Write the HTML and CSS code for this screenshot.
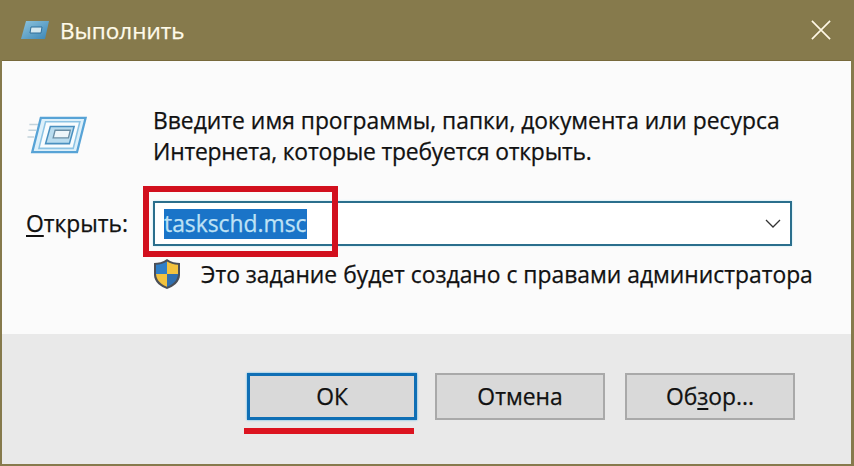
FILE: index.html
```html
<!DOCTYPE html>
<html lang="ru">
<head>
<meta charset="utf-8">
<title>Выполнить</title>
<link rel="stylesheet" href="styles.css">
</head>
<body>
<div class="window">
  <header class="titlebar">
    <svg class="title-icon" viewBox="0 0 30 20" aria-hidden="true">
      <defs><linearGradient id="tg" x1="0" y1="0" x2="1" y2="1"><stop offset="0" stop-color="#8fc4dc"/><stop offset="1" stop-color="#3a86b8"/></linearGradient></defs>
      <path d="M6 1H29L25 19H1Z" fill="url(#tg)"/>
      <path d="M11 7H22L21 13H10Z" fill="#d5e8ef" stroke="#2f6f9a" stroke-width="1"/>
    </svg>
    <span class="title-text">Выполнить</span>
    <svg class="close" viewBox="0 0 22 22" aria-hidden="true"><path d="M1 1L21 21M21 1L1 21" stroke="#fff8e6" stroke-width="1.8" fill="none"/></svg>
  </header>
  <main class="content">
    <div class="intro">
      <svg class="run-icon" viewBox="0 0 62 42" aria-hidden="true">
        <path d="M2 9H11M1 15H9M0 22H7" stroke="#c3d3dc" stroke-width="1.6"/>
        <path d="M14 2H61L52 38H5Z" fill="#ddf0fa" stroke="#57a3d6" stroke-width="2.4"/>
        <path d="M19 6H55L48 34H12Z" fill="#f8fcfe" stroke="#8cc3e4" stroke-width="1.6"/>
        <path d="M24 11H49L44 29H19Z" fill="#b9dcef" stroke="#4a90c0" stroke-width="1.6"/>
        <path d="M29 15H45L43 23H27Z" fill="#eef6fa" stroke="#6a8ea5" stroke-width="1.4"/>
      </svg>
      <p class="intro-text">Введите имя программы, папки, документа или ресурса<br><span class="line-two">Интернета, которые требуется открыть.</span></p>
    </div>
    <div class="open-row">
      <label class="open-label"><span class="u">О</span>ткрыть:</label>
      <div class="combo">
        <span class="selection">taskschd.msc</span>
        <svg class="chevron" viewBox="0 0 16 9" aria-hidden="true"><path d="M1 1L8 8L15 1" stroke="#333" stroke-width="1.3" fill="none"/></svg>
      </div>
    </div>
    <div class="admin-row">
      <svg class="shield" viewBox="0 0 28 32" aria-hidden="true">
        <path d="M14 1C10 4 5 5 1 5V17C1 24 8 29 14 31C20 29 27 24 27 17V5C23 5 18 4 14 1Z" fill="#4a4f58"/>
        <path d="M14 3.500V16H3V6.800C7 6.700 11 5.500 14 3.500Z" fill="#2f7fc8"/>
        <path d="M14 3.500C17 5.500 21 6.700 25 6.800V16H14Z" fill="#f2c23e"/>
        <path d="M3 16H14V28.800C9 27 3.500 23 3 16Z" fill="#f2c23e"/>
        <path d="M14 16H25C24.500 23 19 27 14 28.800Z" fill="#2f6fb0"/>
      </svg>
      <span class="admin-text">Это задание будет создано с правами администратора</span>
    </div>
  </main>
  <footer class="footer">
    <button class="btn btn-default">ОК</button>
    <button class="btn">Отмена</button>
    <button class="btn">Об<span class="u u-bold">з</span>ор...</button>
  </footer>
  <div class="mark-box"></div>
  <div class="mark-line"></div>
</div>
</body>
</html>
```
FILE: styles.css
```css
* { box-sizing: border-box; }
html, body { margin: 0; padding: 0; }
body { width: 854px; height: 466px; overflow: hidden; font-family: "Open Sans", "Noto Sans", sans-serif; color: #111; -webkit-text-stroke: 0.25px currentColor; }
.window { position: relative; width: 854px; height: 466px; display: flex; flex-direction: column; background: #867a4c; padding: 0 3px 2px 2px; }
.titlebar { height: 61px; flex: none; display: flex; align-items: center; padding: 0 20px 0 18px; border-bottom: 1px solid #77693b; }
.title-icon { width: 30px; height: 20px; margin-right: 10px; flex: none; }
.title-text { font-size: 22.500px; color: #fffbea; flex: 1; }
.close { width: 20px; height: 20px; flex: none; }
.content { flex: 1; background: #fbfbfb; padding: 44px 0 0 24px; display: flex; flex-direction: column; }
.intro { display: flex; align-items: flex-start; }
.run-icon { width: 60px; height: 40px; flex: none; margin: 11px 66px 0 1px; }
.intro-text { margin: 0; font-size: 22.850px; line-height: 31px; color: #111; white-space: nowrap; }
.line-two { letter-spacing: -0.2px; }
.open-row { display: flex; align-items: center; margin-top: 34px; }
.open-label { width: 127px; font-size: 22.850px; }
.u { text-decoration: underline; text-underline-offset: 3px; }
.u-bold { text-decoration-thickness: 2px; }
.combo { width: 639px; height: 45px; border: 2px solid #2b6f8d; background: #fff; display: flex; align-items: center; justify-content: space-between; padding: 0 9px; box-shadow: 0 0 2px #bfe9f5; }
.selection { background: #1a74c8; color: #bfe2f5; font-size: 22.850px; line-height: 30px; height: 30px; }
.chevron { width: 16px; height: 9px; }
.admin-row { display: flex; align-items: center; margin-top: 12px; margin-left: 127px; }
.shield { width: 28px; height: 32px; flex: none; margin-right: 20px; }
.admin-text { font-size: 22.850px; white-space: nowrap; }
.footer { height: 130px; flex: none; background: #e9e9e9; display: flex; align-items: flex-start; padding: 39px 0 0 245px; gap: 18px; }
.btn { width: 170px; height: 47px; padding: 0; font: inherit; font-size: 22.850px; color: #111; background: #d9d9d9; border: 2px solid #a9a9a9; }
.btn + .btn + .btn { margin-left: 2px; }
.btn-default { border: 3px solid #0f6fb5; box-shadow: 0 0 2px #4fb3e8; }
.mark-box { position: absolute; left: 143px; top: 186px; width: 195px; height: 71px; border: 6px solid #d2101e; }
.mark-line { position: absolute; left: 244px; top: 428px; width: 170px; height: 6px; background: #dc1420; }
```
